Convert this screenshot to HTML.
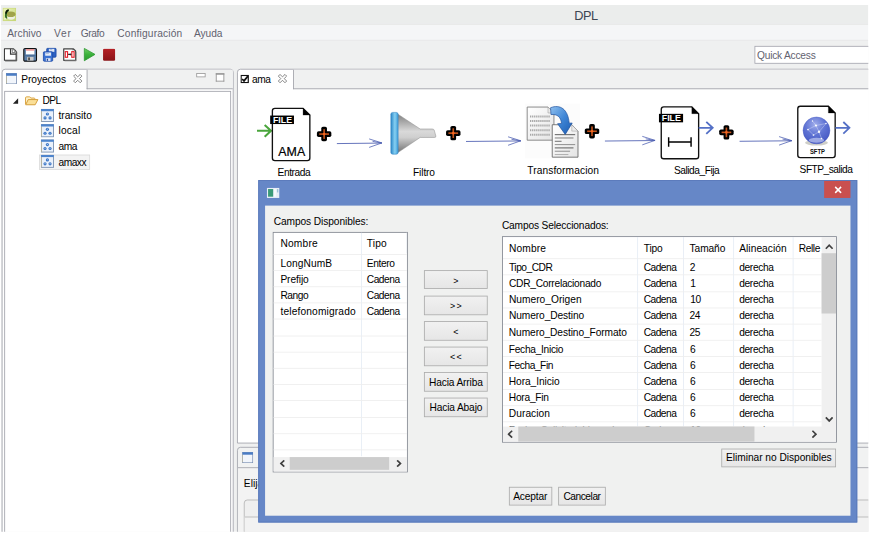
<!DOCTYPE html>
<html lang="es">
<head>
<meta charset="utf-8">
<title>DPL</title>
<style>
html,body{margin:0;padding:0;background:#fff;overflow:hidden;}
body{width:870px;height:551px;position:relative;font-family:"Liberation Sans",sans-serif;}
#s{position:absolute;left:0;top:0;width:1024px;height:649px;transform:scale(0.849609375);transform-origin:0 0;background:#fff;overflow:hidden;}
#s *{box-sizing:border-box;}
.a{position:absolute;}
.t{position:absolute;white-space:nowrap;font-size:12px;line-height:14px;color:#000;}
#win{left:1px;top:6px;width:1021px;height:620px;background:#eff0f0;}
#title{left:1px;top:6px;width:1021px;height:22.4px;background:#ebedec;}
#menu{left:1px;top:28.3px;width:1021px;height:19px;background:#f5f6f7;border-top:1px solid #e1e3e2;}
#tool{left:1px;top:47px;width:1021px;height:33px;background:#eff0f0;border-top:1px solid #e8e9ea;}
.m{color:#62626f;}

.btn{position:absolute;border:1px solid #acacac;background:linear-gradient(#f1f1f1,#e6e6e6);font-size:12px;line-height:14px;text-align:center;white-space:nowrap;color:#000;}
.hl{position:absolute;height:1px;background:#eeeeee;}
.vl{position:absolute;width:1px;background:#e5ecf5;}
.sa{position:absolute;}
</style>
</head>
<body>
<div id="s">
<div id="clip" class="a" style="left:1px;top:6px;width:1021px;height:620px;overflow:hidden;">
<div id="o" class="a" style="left:-1px;top:-6px;width:1024px;height:649px;">
<div id="win" class="a"></div>
<!--TITLE-->
<div id="title" class="a">
  <svg class="a" style="left:2.4px;top:2.7px" width="16" height="16" viewBox="0 0 16 16"><defs><linearGradient id="ai" x1="0" y1="0" x2="1" y2="1"><stop offset="0" stop-color="#eef5b8"/><stop offset="1" stop-color="#c3d67c"/></linearGradient></defs><rect width="16" height="16" fill="#c9d877"/><rect x="1" y="1" width="14" height="14" fill="url(#ai)"/><ellipse cx="10" cy="11.3" rx="4.6" ry="2.8" fill="#edf1e0"/><ellipse cx="9.6" cy="7.8" rx="5.6" ry="3.3" fill="#9a9c3f" opacity="0.9"/><path d="M7 3.2 C4.2 4 3 8 4.6 12.8" fill="none" stroke="#2f6a24" stroke-width="2.2"/><path d="M7.2 3 C5 3.2 4 5 4.2 7" fill="none" stroke="#0c1608" stroke-width="2"/><circle cx="3" cy="13" r="1" fill="#f3f0dc"/></svg>
  <span class="t" style="left:675.02px;top:3px;font-size:15px;line-height:18px;color:#3d4653;letter-spacing:-0.600px;">DPL</span>
</div>
<!--MENU-->
<div id="menu" class="a">
  <span class="t m" style="left:7.60px;top:2.8px;letter-spacing:0.025px;">Archivo</span>
  <span class="t m" style="left:62.57px;top:2.8px;letter-spacing:0.900px;">Ver</span>
  <span class="t m" style="left:93.98px;top:2.8px;letter-spacing:-0.434px;">Grafo</span>
  <span class="t m" style="left:137.07px;top:2.8px;letter-spacing:0.202px;">Configuración</span>
  <span class="t m" style="left:227.35px;top:2.8px;letter-spacing:-0.089px;">Ayuda</span>
</div>
<!--TOOLBAR-->
<div id="tool" class="a">
  <div class="a" style="left:886.8px;top:6.2px;width:140px;height:21px;background:#fff;border:1px solid #a3a4ad;"></div>
  <span class="t m" style="left:890.00px;top:10px;letter-spacing:-0.263px;">Quick Access</span>
<!--TOOLICONS-->
  <svg class="a" style="left:3px;top:7.7px" width="17" height="17" viewBox="0 0 17 17"><path d="M1.2 1.4 L12 1.4 L15 4.4 L15 15 L1.2 15Z" fill="#fff" stroke="#3a3a3a" stroke-width="1.3" stroke-linejoin="round"/><path d="M8.4 1.4 L8.4 7.6 L15 7.6" fill="none" stroke="#3a3a3a" stroke-width="1.4"/><rect x="10.4" y="2.6" width="3" height="3.2" fill="#fff" stroke="#666" stroke-width="0.9"/><path d="M15.7 5 L15.7 15.7 L2 15.7" fill="none" stroke="#555" stroke-width="1.1"/></svg>
  <svg class="a" style="left:26px;top:7.7px" width="17" height="17" viewBox="0 0 17 17"><rect x="1" y="1" width="15" height="15" rx="1.5" fill="#5b7fa8" stroke="#111" stroke-width="1.3"/><rect x="3.5" y="1.8" width="10" height="6.2" fill="#fff"/><rect x="3.5" y="1.8" width="10" height="1.8" fill="#ea8d8d"/><rect x="5" y="11" width="7.5" height="4.4" fill="#c9c9c9"/><rect x="6.2" y="11.6" width="2" height="3.4" fill="#444"/><rect x="2" y="9" width="13" height="1" fill="#476a93"/></svg>
  <svg class="a" style="left:49px;top:7.7px" width="17" height="17" viewBox="0 0 17 17"><g><rect x="5" y="0.8" width="11" height="10.5" rx="1" fill="#2d63c4" stroke="#1f4aa5"/><rect x="7.5" y="1.5" width="6.5" height="3.5" fill="#dfe7f5"/><rect x="8.5" y="2" width="3" height="1" fill="#9db3db"/></g><g><rect x="1" y="5" width="11" height="11" rx="1" fill="#3a72d2" stroke="#1f4aa5"/><rect x="3.2" y="5.8" width="6.8" height="3.8" fill="#e6ecf7"/><rect x="4" y="6.6" width="3.5" height="1" fill="#a3b7dd"/><rect x="4" y="12.5" width="5.5" height="3.2" fill="#dfe6f3"/><rect x="5" y="13.2" width="1.6" height="2.4" fill="#27479a"/></g></svg>
  <svg class="a" style="left:72.5px;top:7.7px" width="17" height="17" viewBox="0 0 17 17"><path d="M1 1.5 L12.5 1.5 L15 4 L15 15 L1 15Z" fill="#fff" stroke="#444" stroke-width="1.4" stroke-linejoin="round"/><path d="M15.6 5 L15.6 15.6 L2 15.6" fill="none" stroke="#888" stroke-width="1"/><rect x="2.8" y="4.8" width="2.7" height="6.6" fill="#fff" stroke="#e3202a" stroke-width="1.35"/><rect x="10.5" y="4.8" width="2.7" height="6.6" fill="#fff" stroke="#e3202a" stroke-width="1.35"/><path d="M6.2 8.1 L10 8.1" stroke="#222" stroke-width="1.5"/><path d="M9 6.6 L7.2 8.1 L9 9.6Z" fill="#222"/><path d="M12 2 L12 3.2" stroke="#222" stroke-width="1"/></svg>
  <svg class="a" style="left:97px;top:8.2px" width="15" height="17" viewBox="0 0 15 17"><defs><linearGradient id="pg" x1="0" y1="0" x2="0" y2="1"><stop offset="0" stop-color="#6fcf63"/><stop offset="0.5" stop-color="#3bb03b"/><stop offset="1" stop-color="#2c9a30"/></linearGradient></defs><path d="M1.2 1 L13.8 8 L1.2 15.5Z" fill="url(#pg)" stroke="#2f9a33" stroke-width="1" stroke-linejoin="round"/></svg>
  <svg class="a" style="left:120px;top:8.8px" width="15" height="15" viewBox="0 0 15 15"><defs><linearGradient id="sg" x1="0" y1="0" x2="0" y2="1"><stop offset="0" stop-color="#b52025"/><stop offset="1" stop-color="#8a1418"/></linearGradient></defs><rect x="0.3" y="0.3" width="14.2" height="14.2" rx="1.5" fill="url(#sg)"/></svg>
</div>
<!--LEFTPANEL-->
<div class="a" style="left:2px;top:81px;width:273px;height:560px;background:#fff;border:1px solid #a2a3ab;border-radius:4px 4px 0 0;"></div>
<div class="a" style="left:102px;top:82px;width:172px;height:23px;background:#f0f1f1;border-left:1px solid #a2a3ab;border-bottom:1px solid #a2a3ab;"></div>
<div class="a" style="left:5px;top:107px;width:267px;height:540px;border:1px solid #a2a3ab;"></div>
<svg class="a" style="left:7px;top:86px" width="13" height="13" viewBox="0 0 13 13"><rect x="0.5" y="0.5" width="12" height="12" fill="#fbfcfe" stroke="#7b90b4"/><rect x="0.3" y="0.3" width="12.4" height="2.9" fill="#4a7cc4"/><rect x="0.2" y="3.2" width="0.9" height="9" fill="#cdbf93" opacity="0.8"/><rect x="1.5" y="3.6" width="10" height="8.4" fill="#f1f5fb"/></svg>
<span class="t" style="left:25.07px;top:86.7px;letter-spacing:-0.093px;">Proyectos</span>
<svg class="a" style="left:86px;top:87px" width="11" height="11" viewBox="0 0 11 11"><path d="M0.6 2.6 L2.6 0.6 L5.5 3.5 L8.4 0.6 L10.4 2.6 L7.5 5.5 L10.4 8.4 L8.4 10.4 L5.5 7.5 L2.6 10.4 L0.6 8.4 L3.5 5.5Z" fill="#fff" stroke="#7d7d7d" stroke-width="1.1"/></svg>
<div class="a" style="left:231px;top:86px;width:11px;height:5px;background:#fff;border:1px solid #9a9a9a;"></div>
<div class="a" style="left:254.3px;top:86.3px;width:9.8px;height:10px;background:#fff;border:1px solid #8e8e8e;border-top:2.2px solid #9a9a9a;"></div>
<!--TREE-->
<svg class="a" style="left:15px;top:115px" width="7" height="8" viewBox="0 0 7 8"><path d="M6.4 0.6 L6.4 7 L0.2 7Z" fill="#222"/></svg>
<svg class="a" style="left:29px;top:111px" width="17" height="14" viewBox="0 0 17 14"><path d="M1 11.5 L1 4.3 Q1 3 2.4 3 L5.6 3 Q6.6 3 7 3.9 L7.3 4.4 L11 4.4 Q12 4.4 12 5.2 L12 6" fill="#fdf0c8" stroke="#d9a13c" stroke-width="1.1"/><path d="M1.2 12.3 L4.2 6.2 L15.6 6.2 L12.4 12.3Z" fill="#fadf97" stroke="#d39a35" stroke-width="1.1" stroke-linejoin="round"/></svg>
<span class="t" style="left:49.91px;top:111px;letter-spacing:-0.600px;">DPL</span>
<div class="a" style="left:46px;top:182px;width:60px;height:18px;background:#f3f3f3;border:1px solid #dcdcdc;"></div>
<svg class="a" style="left:48.3px;top:127.7px" width="16" height="16" viewBox="0 0 16 16"><rect x="0.6" y="0.6" width="14.4" height="14.4" fill="#eaf1fb" stroke="#7f95b5" stroke-width="1.1"/><rect x="0.3" y="0.3" width="15" height="2.6" fill="#4d84cc"/><rect x="0.3" y="2.9" width="1" height="12" fill="#c8b98a" opacity="0.7"/><circle cx="7.8" cy="6.2" r="1.85" fill="#3873c4"/><circle cx="5" cy="10.8" r="1.85" fill="#3873c4"/><circle cx="10.9" cy="10.8" r="1.85" fill="#3873c4"/><circle cx="7.8" cy="6" r="0.7" fill="#a9c8ef"/><circle cx="5" cy="10.6" r="0.7" fill="#a9c8ef"/><circle cx="10.9" cy="10.6" r="0.7" fill="#a9c8ef"/></svg>
<svg class="a" style="left:48.3px;top:145.7px" width="16" height="16" viewBox="0 0 16 16"><rect x="0.6" y="0.6" width="14.4" height="14.4" fill="#eaf1fb" stroke="#7f95b5" stroke-width="1.1"/><rect x="0.3" y="0.3" width="15" height="2.6" fill="#4d84cc"/><rect x="0.3" y="2.9" width="1" height="12" fill="#c8b98a" opacity="0.7"/><circle cx="7.8" cy="6.2" r="1.85" fill="#3873c4"/><circle cx="5" cy="10.8" r="1.85" fill="#3873c4"/><circle cx="10.9" cy="10.8" r="1.85" fill="#3873c4"/><circle cx="7.8" cy="6" r="0.7" fill="#a9c8ef"/><circle cx="5" cy="10.6" r="0.7" fill="#a9c8ef"/><circle cx="10.9" cy="10.6" r="0.7" fill="#a9c8ef"/></svg>
<svg class="a" style="left:48.3px;top:163.7px" width="16" height="16" viewBox="0 0 16 16"><rect x="0.6" y="0.6" width="14.4" height="14.4" fill="#eaf1fb" stroke="#7f95b5" stroke-width="1.1"/><rect x="0.3" y="0.3" width="15" height="2.6" fill="#4d84cc"/><rect x="0.3" y="2.9" width="1" height="12" fill="#c8b98a" opacity="0.7"/><circle cx="7.8" cy="6.2" r="1.85" fill="#3873c4"/><circle cx="5" cy="10.8" r="1.85" fill="#3873c4"/><circle cx="10.9" cy="10.8" r="1.85" fill="#3873c4"/><circle cx="7.8" cy="6" r="0.7" fill="#a9c8ef"/><circle cx="5" cy="10.6" r="0.7" fill="#a9c8ef"/><circle cx="10.9" cy="10.6" r="0.7" fill="#a9c8ef"/></svg>
<svg class="a" style="left:48.3px;top:181.7px" width="16" height="16" viewBox="0 0 16 16"><rect x="0.6" y="0.6" width="14.4" height="14.4" fill="#eaf1fb" stroke="#7f95b5" stroke-width="1.1"/><rect x="0.3" y="0.3" width="15" height="2.6" fill="#4d84cc"/><rect x="0.3" y="2.9" width="1" height="12" fill="#c8b98a" opacity="0.7"/><circle cx="7.8" cy="6.2" r="1.85" fill="#3873c4"/><circle cx="5" cy="10.8" r="1.85" fill="#3873c4"/><circle cx="10.9" cy="10.8" r="1.85" fill="#3873c4"/><circle cx="7.8" cy="6" r="0.7" fill="#a9c8ef"/><circle cx="5" cy="10.6" r="0.7" fill="#a9c8ef"/><circle cx="10.9" cy="10.6" r="0.7" fill="#a9c8ef"/></svg>
<span class="t" style="left:68.86px;top:129px;letter-spacing:-0.019px;">transito</span>
<span class="t" style="left:68.86px;top:147px;letter-spacing:0.205px;">local</span>
<span class="t" style="left:68.86px;top:165px;letter-spacing:-0.600px;">ama</span>
<span class="t" style="left:68.86px;top:184px;letter-spacing:-0.600px;">amaxx</span>
<!--EDITOR-->
<div class="a" style="left:279px;top:81px;width:760px;height:441px;background:#fff;border:1px solid #a2a3ab;border-radius:4px 4px 0 0;"></div>
<div class="a" style="left:345px;top:82px;width:690px;height:23px;background:#f0f1f1;border-left:1px solid #a2a3ab;border-bottom:1px solid #a2a3ab;"></div>
<svg class="a" style="left:283px;top:88px" width="10" height="10" viewBox="0 0 10 10"><rect x="0.75" y="0.75" width="8.5" height="8.5" fill="#fff" stroke="#111" stroke-width="1.5"/><path d="M2 5 L4.2 7.2 L8.8 1.6" fill="none" stroke="#111" stroke-width="2"/></svg>
<span class="t" style="left:296.61px;top:86.6px;letter-spacing:-0.600px;">ama</span>
<svg class="a" style="left:327px;top:87px" width="11" height="11" viewBox="0 0 11 11"><path d="M0.6 2.6 L2.6 0.6 L5.5 3.5 L8.4 0.6 L10.4 2.6 L7.5 5.5 L10.4 8.4 L8.4 10.4 L5.5 7.5 L2.6 10.4 L0.6 8.4 L3.5 5.5Z" fill="#fff" stroke="#7d7d7d" stroke-width="1.1"/></svg>
<!--BOTTOM-->
<div class="a" style="left:279px;top:526px;width:760px;height:120px;background:#f1f2f2;border:1px solid #a2a3ab;border-radius:4px 4px 0 0;"></div>
<div class="a" style="left:280px;top:550px;width:760px;height:100px;background:#f3f3f3;border-top:1px solid #a2a3ab;"></div>
<svg class="a" style="left:285px;top:532px" width="13" height="13" viewBox="0 0 13 13"><rect x="0.5" y="0.5" width="12" height="12" fill="#fbfcfe" stroke="#7b90b4"/><rect x="0.3" y="0.3" width="12.4" height="2.9" fill="#4a7cc4"/><rect x="0.2" y="3.2" width="0.9" height="9" fill="#cdbf93" opacity="0.8"/><rect x="1.5" y="3.6" width="10" height="8.4" fill="#f1f5fb"/></svg>
<span class="t" style="left:287px;top:562px;">Elija</span>
<div class="a" style="left:287px;top:588px;width:760px;height:80px;background:#efefef;border:1px solid #b5b5b5;border-radius:4px 0 0 0;"></div>
<div class="a" style="left:288px;top:608px;width:760px;height:40px;background:#f2f2f2;border-top:1px solid #b5b5b5;"></div>
<!--GRAPH-->
<svg class="a" style="left:0;top:0" width="1024" height="215" viewBox="0 0 1024 215" font-family="Liberation Sans, sans-serif">
<defs>
<linearGradient id="fb" x1="0" y1="0" x2="1" y2="0"><stop offset="0" stop-color="#2a86c8"/><stop offset="0.55" stop-color="#86d0f2"/><stop offset="1" stop-color="#3e9cd8"/></linearGradient>
<linearGradient id="fc" x1="0" y1="0" x2="0" y2="1"><stop offset="0" stop-color="#7d7d7d"/><stop offset="0.45" stop-color="#d9d9d9"/><stop offset="0.6" stop-color="#cfcfcf"/><stop offset="1" stop-color="#6e6e6e"/></linearGradient>
<radialGradient id="gl" cx="0.45" cy="0.28" r="0.75"><stop offset="0" stop-color="#9eabea"/><stop offset="0.5" stop-color="#6074d4"/><stop offset="1" stop-color="#4356c2"/></radialGradient>
<linearGradient id="ba" x1="0" y1="0" x2="1" y2="1"><stop offset="0" stop-color="#8fc0ef"/><stop offset="0.5" stop-color="#3f86d6"/><stop offset="1" stop-color="#1d5bb0"/></linearGradient>
<linearGradient id="dg" x1="0" y1="0" x2="1" y2="1"><stop offset="0" stop-color="#ffffff"/><stop offset="1" stop-color="#e4e4e4"/></linearGradient>
</defs>
<path d="M302.5 154 L318.5 154 M311.5 147 L319.0 154 L311.5 161" fill="none" stroke="#4aa53c" stroke-width="2.4"/><path d="M323.6 127.5 L356.70000000000005 127.5 L364.70000000000005 135.5 L364.70000000000005 186.0 Q364.70000000000005 189.0 361.70000000000005 189.0 L323.6 189.0 Q320.6 189.0 320.6 186.0 L320.6 130.5 Q320.6 127.5 323.6 127.5Z" fill="#fff" stroke="#111" stroke-width="1.6"/><path d="M356.70000000000005 127.5 L364.70000000000005 135.5 L356.70000000000005 135.5Z" fill="#000" stroke="#000" stroke-width="0.3"/><rect x="318" y="136" width="28" height="10" fill="#000"/><text x="321.3" y="144.9" font-size="10.2" font-weight="bold" fill="#fff" textLength="22.5" lengthAdjust="spacingAndGlyphs">FILE</text><text x="327.6" y="183.6" font-size="16" fill="#000" stroke="#000" stroke-width="0.25" textLength="31.6" lengthAdjust="spacingAndGlyphs">AMA</text><g transform="translate(373,149.3)"><rect x="0" y="5.15" width="17" height="6.7" rx="2" fill="#000"/><rect x="5.15" y="0" width="6.7" height="17" rx="2" fill="#000"/><rect x="2.8" y="7.55" width="11.4" height="1.9" fill="#c4531c"/><rect x="7.55" y="2.8" width="1.9" height="11.4" fill="#c4531c"/><circle cx="8.5" cy="8.5" r="1.5" fill="#f4661f"/></g><path d="M396.5 169 L449.5 168.4" stroke="#4a5cb0" stroke-width="1"/><path d="M434.5 163.5 L449.5 168.2 L434.5 173.5 M438.5 166.4 L449.5 168.4" fill="none" stroke="#4a5cb0" stroke-width="0.9"/><path d="M467 133.5 L494.5 151.8 L508.5 151.8 Q510.5 151.8 511 153 L513 160 Q513.4 161.8 511.5 161.8 L494.5 161.8 L467 180.5Z" fill="url(#fc)" stroke="#8a8a8a" stroke-width="0.6"/><rect x="460" y="132.3" width="8.6" height="49.2" rx="2.2" fill="url(#fb)" stroke="#2b7fbf" stroke-width="0.6"/><g transform="translate(525,148.2)"><rect x="0" y="5.15" width="17" height="6.7" rx="2" fill="#000"/><rect x="5.15" y="0" width="6.7" height="17" rx="2" fill="#000"/><rect x="2.8" y="7.55" width="11.4" height="1.9" fill="#c4531c"/><rect x="7.55" y="2.8" width="1.9" height="11.4" fill="#c4531c"/><circle cx="8.5" cy="8.5" r="1.5" fill="#f4661f"/></g><path d="M548.5 166.5 L613 165.9" stroke="#4a5cb0" stroke-width="1"/><path d="M598 161.0 L613 165.7 L598 171.0 M602 163.9 L613 165.9" fill="none" stroke="#4a5cb0" stroke-width="0.9"/><rect x="618" y="122" width="64.5" height="64.5" fill="#fcfcfc"/><path d="M620.5 126 L645 126 L652 133 L652 165 L620.5 165Z" fill="url(#dg)" stroke="#777" stroke-width="1"/><path d="M645 126 L645 133 L652 133Z" fill="#e9e9e9" stroke="#999" stroke-width="0.6"/><path d="M624 137.0 L647 137.0" stroke="#9a9a9a" stroke-width="2.4" stroke-dasharray="1.3 1.1"/><path d="M624 142.4 L647 142.4" stroke="#9a9a9a" stroke-width="2.4" stroke-dasharray="1.3 1.1"/><path d="M624 147.8 L647 147.8" stroke="#9a9a9a" stroke-width="2.4" stroke-dasharray="1.3 1.1"/><path d="M624 153.2 L647 153.2" stroke="#9a9a9a" stroke-width="2.4" stroke-dasharray="1.3 1.1"/><path d="M624 158.6 L647 158.6" stroke="#9a9a9a" stroke-width="2.4" stroke-dasharray="1.3 1.1"/><path d="M650 146.8 L673 146.8 L680.3 154.3 L680.3 185 L650 185Z" fill="url(#dg)" stroke="#666" stroke-width="1"/><path d="M673 146.8 L673 154.3 L680.3 154.3Z" fill="#ececec" stroke="#999" stroke-width="0.6"/><path d="M653 158.5 L677 158.5" stroke="#555" stroke-width="1.1"/><path d="M653 162.4 L675 162.4" stroke="#777" stroke-width="1.1"/><path d="M653 166.3 L661 166.3" stroke="#666" stroke-width="1.1"/><path d="M653 170.2 L677 170.2" stroke="#888" stroke-width="1.1"/><path d="M653 174.1 L675 174.1" stroke="#555" stroke-width="1.1"/><path d="M653 178.0 L671 178.0" stroke="#888" stroke-width="1.1"/><path d="M653 181.9 L669 181.9" stroke="#aaa" stroke-width="1.1"/><path d="M648 126.8 C659 122.5 668.5 128 670 145 L673.5 144.8 L665.3 158.2 L656.3 145.6 L661 145.3 C660 137.5 656 134.2 648.5 134.8Z" fill="url(#ba)" stroke="#1e4f9c" stroke-width="0.8"/><g transform="translate(688.3,146)"><rect x="0" y="5.15" width="17" height="6.7" rx="2" fill="#000"/><rect x="5.15" y="0" width="6.7" height="17" rx="2" fill="#000"/><rect x="2.8" y="7.55" width="11.4" height="1.9" fill="#c4531c"/><rect x="7.55" y="2.8" width="1.9" height="11.4" fill="#c4531c"/><circle cx="8.5" cy="8.5" r="1.5" fill="#f4661f"/></g><path d="M712 166 L771 165.4" stroke="#4a5cb0" stroke-width="1"/><path d="M756 160.5 L771 165.2 L756 170.5 M760 163.4 L771 165.4" fill="none" stroke="#4a5cb0" stroke-width="0.9"/><path d="M781.3 125.8 L814.3 125.8 L822.3 133.8 L822.3 183.8 Q822.3 186.8 819.3 186.8 L781.3 186.8 Q778.3 186.8 778.3 183.8 L778.3 128.8 Q778.3 125.8 781.3 125.8Z" fill="#fff" stroke="#111" stroke-width="1.6"/><path d="M814.3 125.8 L822.3 133.8 L814.3 133.8Z" fill="#000" stroke="#000" stroke-width="0.3"/><rect x="775.6" y="134" width="28.4" height="10" fill="#000"/><text x="778.9" y="142.9" font-size="10.2" font-weight="bold" fill="#fff" textLength="22.5" lengthAdjust="spacingAndGlyphs">FILE</text><path d="M786.5 167.2 L814 167.2 M787 161.6 L787 172.8 M813.4 161.6 L813.4 172.8" stroke="#000" stroke-width="1.7"/><path d="M822.3 150.5 L838.3 150.5 M831.3 143.5 L838.8 150.5 L831.3 157.5" fill="none" stroke="#5470c6" stroke-width="2.2"/><g transform="translate(846.5,147.3)"><rect x="0" y="5.15" width="17" height="6.7" rx="2" fill="#000"/><rect x="5.15" y="0" width="6.7" height="17" rx="2" fill="#000"/><rect x="2.8" y="7.55" width="11.4" height="1.9" fill="#c4531c"/><rect x="7.55" y="2.8" width="1.9" height="11.4" fill="#c4531c"/><circle cx="8.5" cy="8.5" r="1.5" fill="#f4661f"/></g><path d="M870.5 166.3 L932 165.70000000000002" stroke="#4a5cb0" stroke-width="1"/><path d="M917 160.8 L932 165.5 L917 170.8 M921 163.70000000000002 L932 165.70000000000002" fill="none" stroke="#4a5cb0" stroke-width="0.9"/><path d="M942 125 L975 125 L983 133 L983 182.5 Q983 185.5 980 185.5 L942 185.5 Q939 185.5 939 182.5 L939 128 Q939 125 942 125Z" fill="#fff" stroke="#111" stroke-width="1.6"/><path d="M975 125 L983 133 L975 133Z" fill="#000" stroke="#000" stroke-width="0.3"/><ellipse cx="961" cy="168" rx="13.5" ry="3.4" fill="#a8a79a" opacity="0.55"/><circle cx="961" cy="153.5" r="15.8" fill="url(#gl)" stroke="#4659c2" stroke-width="0.5"/><ellipse cx="961" cy="165" rx="9" ry="3" fill="#dfe4fa" opacity="0.55"/><path d="M951 152.4 L960.4 147.7 L972.2 145.4 M960.4 147.7 L964 155.1 L957.5 158.9 M964 155.1 L966.9 163 M964 155.1 L972.2 145.4 M956.3 142.4 L960.4 147.7 M951 152.4 L957.5 158.9" fill="none" stroke="#e9edff" stroke-width="0.7" opacity="0.6"/><g fill="#fff" opacity="0.95"><circle cx="960.4" cy="147.7" r="1.3"/><circle cx="951" cy="152.4" r="1"/><circle cx="964" cy="155.1" r="1.4"/><circle cx="957.5" cy="158.9" r="1"/><circle cx="966.9" cy="163" r="1"/><circle cx="972.2" cy="145.4" r="0.9"/><circle cx="956.3" cy="142.4" r="0.8"/></g><text x="953.3" y="181.2" font-size="8" font-weight="bold" fill="#111" textLength="17.6" lengthAdjust="spacingAndGlyphs">SFTP</text><path d="M983.3 150.4 L999.3 150.4 M992.6 143.6 L999.8 150.4 L992.6 157.2" fill="none" stroke="#5470c6" stroke-width="2.1"/>
</svg>
<span class="t" style="left:326.63px;top:196px;letter-spacing:-0.488px;">Entrada</span>
<span class="t" style="left:486.11px;top:196px;letter-spacing:-0.149px;">Filtro</span>
<span class="t" style="left:620.52px;top:193.5px;letter-spacing:0.120px;">Transformacion</span>
<span class="t" style="left:793.31px;top:193.5px;letter-spacing:-0.555px;">Salida_Fija</span>
<span class="t" style="left:941.15px;top:193px;letter-spacing:-0.600px;">SFTP_salida</span>
<!--DIALOG-->
<div class="a" style="left:304px;top:212px;width:705px;height:402.5px;background:#6687c7;border:1px solid #5777b9;"></div>
<div class="a" style="left:312px;top:242px;width:689px;height:364.5px;background:#f0f1f0;"></div>
<svg class="a" style="left:313.5px;top:221px" width="15" height="12" viewBox="0 0 15 12"><rect x="0" y="0" width="15" height="12" fill="#e8eef7"/><rect x="1.5" y="1.5" width="6" height="9" fill="#3b9a78"/><rect x="8.5" y="1.5" width="2.5" height="9" fill="#f7f9fc"/><rect x="12" y="1.5" width="1.6" height="4" fill="#9fc3d9"/></svg>
<div class="a" style="left:970px;top:213px;width:31.3px;height:19.6px;background:#c9504f;"></div>
<svg class="a" style="left:981.6px;top:218.6px" width="9" height="9" viewBox="0 0 9 9"><path d="M1 1 L8 8 M8 1 L1 8" stroke="#fff" stroke-width="1.8"/></svg>
<span class="t" style="left:322.15px;top:254px;letter-spacing:-0.114px;">Campos Disponibles:</span>
<span class="t" style="left:590.75px;top:259.3px;letter-spacing:-0.186px;">Campos Seleccionados:</span>
<div class="a" style="left:321.4px;top:273.3px;width:158.20000000000005px;height:282.3px;background:#fff;border:1px solid #828790;"></div>
<div class="vl" style="left:425px;top:274.3px;height:263.2px;"></div>
<div class="vl" style="left:478px;top:274.3px;height:24px;background:#eef1f5;"></div>
<div class="hl" style="left:322.4px;top:298.6px;width:156.20000000000005px;"></div>
<div class="hl" style="left:322.4px;top:317.8px;width:156.20000000000005px;"></div>
<div class="hl" style="left:322.4px;top:337.0px;width:156.20000000000005px;"></div>
<div class="hl" style="left:322.4px;top:356.2px;width:156.20000000000005px;"></div>
<div class="hl" style="left:322.4px;top:375.3px;width:156.20000000000005px;"></div>
<div class="hl" style="left:322.4px;top:394.5px;width:156.20000000000005px;"></div>
<div class="hl" style="left:322.4px;top:413.7px;width:156.20000000000005px;"></div>
<div class="hl" style="left:322.4px;top:432.9px;width:156.20000000000005px;"></div>
<div class="hl" style="left:322.4px;top:452.1px;width:156.20000000000005px;"></div>
<div class="hl" style="left:322.4px;top:471.3px;width:156.20000000000005px;"></div>
<div class="hl" style="left:322.4px;top:490.5px;width:156.20000000000005px;"></div>
<div class="hl" style="left:322.4px;top:509.6px;width:156.20000000000005px;"></div>
<div class="hl" style="left:322.4px;top:528.8px;width:156.20000000000005px;"></div>
<span class="t" style="left:330.04px;top:280.2px;letter-spacing:0.250px;">Nombre</span><span class="t" style="left:431.73px;top:280.2px;letter-spacing:0.184px;">Tipo</span>
<span class="t" style="left:330.04px;top:302.8px;letter-spacing:0.117px;">LongNumB</span><span class="t" style="left:431.73px;top:302.8px;letter-spacing:-0.451px;">Entero</span>
<span class="t" style="left:330.04px;top:322.0px;letter-spacing:-0.113px;">Prefijo</span><span class="t" style="left:431.73px;top:322.0px;letter-spacing:-0.563px;">Cadena</span>
<span class="t" style="left:330.04px;top:341.2px;letter-spacing:-0.506px;">Rango</span><span class="t" style="left:431.73px;top:341.2px;letter-spacing:-0.563px;">Cadena</span>
<span class="t" style="left:330.16px;top:360.4px;letter-spacing:0.169px;">telefonomigrado</span><span class="t" style="left:431.73px;top:360.4px;letter-spacing:-0.563px;">Cadena</span>
<div class="a" style="left:322.4px;top:537.5px;width:156.20000000000005px;height:17.100000000000023px;background:#f0f0f0;"></div>
<div class="a" style="left:340.5px;top:538px;width:117.5px;height:15px;background:#cdcdcd;"></div>
<svg class="a" style="left:328.5px;top:541px" width="7" height="9" viewBox="0 0 7 9"><path d="M5.6 0.8 L1.6 4.5 L5.6 8.2" fill="none" stroke="#404040" stroke-width="2"/></svg>
<svg class="a" style="left:465.5px;top:541px" width="7" height="9" viewBox="0 0 7 9"><path d="M1.4 0.8 L5.4 4.5 L1.4 8.2" fill="none" stroke="#404040" stroke-width="2"/></svg>
<div class="btn" style="left:498.9px;top:317.8px;width:75.4px;height:22.7px;padding-top:4.3px;font-size:10.5px;">&gt;</div>
<div class="btn" style="left:498.9px;top:347.9px;width:75.4px;height:22.7px;padding-top:4.3px;font-size:10.5px;letter-spacing:1.7px;text-indent:1.7px;">&gt;&gt;</div>
<div class="btn" style="left:498.9px;top:378.0px;width:75.4px;height:22.7px;padding-top:4.3px;font-size:10.5px;">&lt;</div>
<div class="btn" style="left:498.9px;top:408.1px;width:75.4px;height:22.7px;padding-top:4.3px;font-size:10.5px;letter-spacing:1.7px;text-indent:1.7px;">&lt;&lt;</div>
<div class="btn" style="left:498.9px;top:438.2px;width:75.4px;height:22.7px;padding-top:3.5px;letter-spacing:-0.179px;">Hacia Arriba</div>
<div class="btn" style="left:498.9px;top:468.3px;width:75.4px;height:22.7px;padding-top:3.5px;letter-spacing:-0.171px;">Hacia Abajo</div>
<div class="a" style="left:591.2px;top:278.2px;width:394.0999999999999px;height:243.00000000000006px;background:#fff;border:1px solid #828790;overflow:hidden;" id="rt">
<div class="vl" style="left:158.3px;top:0;height:222.8px;"></div>
<div class="vl" style="left:212.3px;top:0;height:222.8px;"></div>
<div class="vl" style="left:270.9px;top:0;height:222.8px;"></div>
<div class="vl" style="left:341.0px;top:0;height:222.8px;"></div>
<div class="hl" style="left:0;top:25.0px;width:375.29999999999995px;"></div>
<div class="hl" style="left:0;top:44.2px;width:375.29999999999995px;"></div>
<div class="hl" style="left:0;top:63.4px;width:375.29999999999995px;"></div>
<div class="hl" style="left:0;top:82.6px;width:375.29999999999995px;"></div>
<div class="hl" style="left:0;top:101.7px;width:375.29999999999995px;"></div>
<div class="hl" style="left:0;top:120.9px;width:375.29999999999995px;"></div>
<div class="hl" style="left:0;top:140.1px;width:375.29999999999995px;"></div>
<div class="hl" style="left:0;top:159.3px;width:375.29999999999995px;"></div>
<div class="hl" style="left:0;top:178.5px;width:375.29999999999995px;"></div>
<div class="hl" style="left:0;top:197.7px;width:375.29999999999995px;"></div>
<div class="hl" style="left:0;top:216.8px;width:375.29999999999995px;"></div>
<div class="hl" style="left:0;top:236.0px;width:375.29999999999995px;"></div>
<span class="t" style="left:6.92px;top:6.4px;letter-spacing:0.156px;">Nombre</span><span class="t" style="left:165.46px;top:6.4px;letter-spacing:-0.169px;">Tipo</span><span class="t" style="left:219.49px;top:6.4px;letter-spacing:-0.129px;">Tamaño</span><span class="t" style="left:277.87px;top:6.4px;letter-spacing:0.056px;">Alineación</span><span class="t" style="left:348.01px;top:6.4px;letter-spacing:-0.503px;">Relle</span>
<span class="t" style="left:6.92px;top:28.6px;letter-spacing:-0.571px;">Tipo_CDR</span><span class="t" style="left:165.46px;top:28.6px;letter-spacing:-0.600px;">Cadena</span><span class="t" style="left:219.72px;top:28.6px;">2</span><span class="t" style="left:277.87px;top:28.6px;letter-spacing:-0.396px;">derecha</span>
<span class="t" style="left:6.92px;top:47.8px;letter-spacing:-0.310px;">CDR_Correlacionado</span><span class="t" style="left:165.46px;top:47.8px;letter-spacing:-0.600px;">Cadena</span><span class="t" style="left:220.32px;top:47.8px;">1</span><span class="t" style="left:277.87px;top:47.8px;letter-spacing:-0.396px;">derecha</span>
<span class="t" style="left:6.92px;top:67.0px;letter-spacing:0.004px;">Numero_Origen</span><span class="t" style="left:165.46px;top:67.0px;letter-spacing:-0.600px;">Cadena</span><span class="t" style="left:220.32px;top:67.0px;letter-spacing:-0.600px;">10</span><span class="t" style="left:277.87px;top:67.0px;letter-spacing:-0.396px;">derecha</span>
<span class="t" style="left:6.92px;top:86.2px;letter-spacing:-0.116px;">Numero_Destino</span><span class="t" style="left:165.46px;top:86.2px;letter-spacing:-0.600px;">Cadena</span><span class="t" style="left:219.49px;top:86.2px;letter-spacing:-0.600px;">24</span><span class="t" style="left:277.87px;top:86.2px;letter-spacing:-0.396px;">derecha</span>
<span class="t" style="left:6.68px;top:105.3px;letter-spacing:-0.107px;">Numero_Destino_Formato</span><span class="t" style="left:165.46px;top:105.3px;letter-spacing:-0.600px;">Cadena</span><span class="t" style="left:219.49px;top:105.3px;letter-spacing:-0.600px;">25</span><span class="t" style="left:277.87px;top:105.3px;letter-spacing:-0.396px;">derecha</span>
<span class="t" style="left:6.68px;top:124.5px;letter-spacing:-0.351px;">Fecha_Inicio</span><span class="t" style="left:165.46px;top:124.5px;letter-spacing:-0.600px;">Cadena</span><span class="t" style="left:219.83px;top:124.5px;">6</span><span class="t" style="left:277.87px;top:124.5px;letter-spacing:-0.396px;">derecha</span>
<span class="t" style="left:6.68px;top:143.7px;letter-spacing:-0.529px;">Fecha_Fin</span><span class="t" style="left:165.46px;top:143.7px;letter-spacing:-0.600px;">Cadena</span><span class="t" style="left:219.83px;top:143.7px;">6</span><span class="t" style="left:277.87px;top:143.7px;letter-spacing:-0.396px;">derecha</span>
<span class="t" style="left:6.68px;top:162.9px;letter-spacing:-0.088px;">Hora_Inicio</span><span class="t" style="left:165.46px;top:162.9px;letter-spacing:-0.600px;">Cadena</span><span class="t" style="left:219.83px;top:162.9px;">6</span><span class="t" style="left:277.87px;top:162.9px;letter-spacing:-0.396px;">derecha</span>
<span class="t" style="left:6.68px;top:182.1px;letter-spacing:-0.296px;">Hora_Fin</span><span class="t" style="left:165.46px;top:182.1px;letter-spacing:-0.600px;">Cadena</span><span class="t" style="left:219.83px;top:182.1px;">6</span><span class="t" style="left:277.87px;top:182.1px;letter-spacing:-0.396px;">derecha</span>
<span class="t" style="left:6.68px;top:201.3px;letter-spacing:0.062px;">Duracion</span><span class="t" style="left:165.46px;top:201.3px;letter-spacing:-0.600px;">Cadena</span><span class="t" style="left:219.83px;top:201.3px;">6</span><span class="t" style="left:277.87px;top:201.3px;letter-spacing:-0.396px;">derecha</span>
<span class="t" style="left:6.68px;top:220.4px;letter-spacing:-0.342px;">Fecha_Solicitud_Llamada</span><span class="t" style="left:165.46px;top:220.4px;letter-spacing:-0.600px;">Cadena</span><span class="t" style="left:220.32px;top:220.4px;letter-spacing:-0.600px;">10</span><span class="t" style="left:277.87px;top:220.4px;letter-spacing:-0.396px;">derecha</span>
<div class="a" style="left:375.29999999999995px;top:0;width:16.799999999999955px;height:241.00000000000006px;background:#f0f0f0;"></div>
<div class="a" style="left:0;top:223.3px;width:392.0999999999999px;height:17.700000000000045px;background:#f0f0f0;"></div>
<div class="a" style="left:375.29999999999995px;top:18.5px;width:16.799999999999955px;height:71.8px;background:#cdcdcd;"></div>
<div class="a" style="left:18.0px;top:223.3px;width:278.0px;height:17.700000000000045px;background:#cdcdcd;"></div>
<svg class="sa" style="left:378.79999999999995px;top:8.0px" width="10" height="7" viewBox="0 0 10 7"><path d="M1 5.8 L5 1.6 L9 5.8" fill="none" stroke="#404040" stroke-width="2"/></svg>
<svg class="sa" style="left:378.79999999999995px;top:211.3px" width="10" height="7" viewBox="0 0 10 7"><path d="M1 1.2 L5 5.4 L9 1.2" fill="none" stroke="#404040" stroke-width="2"/></svg>
<svg class="sa" style="left:5.2999999999999545px;top:227.3px" width="7" height="10" viewBox="0 0 7 10"><path d="M5.8 1 L1.6 5 L5.8 9" fill="none" stroke="#404040" stroke-width="2"/></svg>
<svg class="sa" style="left:362.79999999999995px;top:227.3px" width="7" height="10" viewBox="0 0 7 10"><path d="M1.2 1 L5.4 5 L1.2 9" fill="none" stroke="#404040" stroke-width="2"/></svg>
</div>
<div class="btn" style="left:849.4px;top:527.8px;width:134.7px;height:22.5px;padding-top:3.7px;letter-spacing:-0.050px;">Eliminar no Disponibles</div>
<div class="btn" style="left:598.6px;top:572.8px;width:51px;height:22.7px;padding-top:3.7px;letter-spacing:-0.184px;">Aceptar</div>
<div class="btn" style="left:657.1px;top:572.8px;width:55.8px;height:22.7px;padding-top:3.7px;letter-spacing:-0.539px;">Cancelar</div>
</div>
</div>
</div>
</body>
</html>
